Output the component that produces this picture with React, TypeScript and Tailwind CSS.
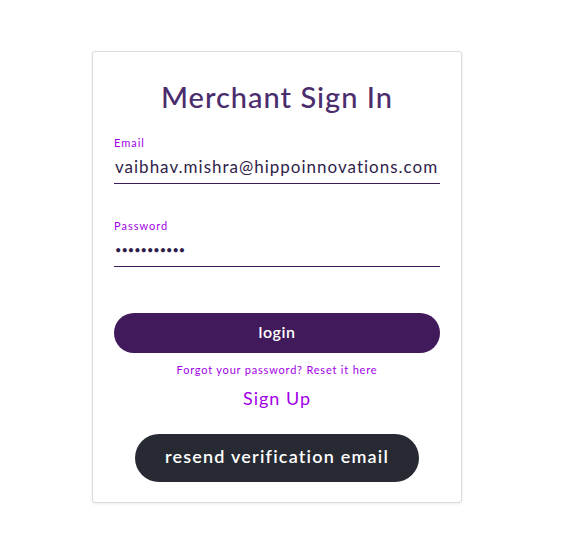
import React from 'react'

export default function App() {
  return (
    <div className="min-h-[556px] w-full bg-white pt-[51px]" style={{ fontFamily: '"Lato", "Noto Sans", sans-serif' }}>
      <div className="ml-[92px] w-[370px] rounded-[3px] border border-[#dcdcdc] bg-white px-[21px] pb-[20px] pt-[26px] shadow-[0_1px_3px_rgba(0,0,0,0.08)]">
        <h1 className="text-center text-[29px] leading-[38px] font-medium tracking-[1px] text-[#4b2d6e]">Merchant Sign In</h1>

        <div className="mt-[20px]">
          <label className="block text-[11px] leading-[14px] tracking-[1px] text-[#a100e6]">Email</label>
          <div className="mt-[5px] border-b border-[#3d1a5c] pb-[4px] text-[17px] leading-[24px] tracking-[1px] text-[#2f1d4a] whitespace-nowrap pl-[1px]">
            vaibhav.mishra@hippoinnovations.com
          </div>
        </div>

        <div className="mt-[35px]">
          <label className="block text-[11px] leading-[14px] tracking-[1px] text-[#a100e6]">Password</label>
          <div className="mt-[5px] border-b border-[#3d1a5c] pb-[4px] text-[11px] leading-[24px] text-[#2f1d4a] pl-[1px]">
            •••••••••••
          </div>
        </div>

        <button className="mt-[46px] flex h-[40px] w-full items-center justify-center rounded-full bg-[#401a5a] pb-[3px] text-[16px] font-semibold tracking-[0.5px] text-white">
          login
        </button>

        <p className="mt-[10px] text-center text-[11px] leading-[14px] tracking-[0.8px] text-[#a100e6]">Forgot your password? Reset it here</p>
        <p className="mt-[10px] text-center text-[18px] leading-[22px] tracking-[1px] text-[#a100e6]">Sign Up</p>

        <div className="mt-[25px] flex justify-center">
          <button className="h-[48px] w-[284px] rounded-full bg-[#272a33] pb-[3px] text-[18px] font-semibold tracking-[1.2px] text-white">
            resend verification email
          </button>
        </div>
      </div>
    </div>
  )
}
